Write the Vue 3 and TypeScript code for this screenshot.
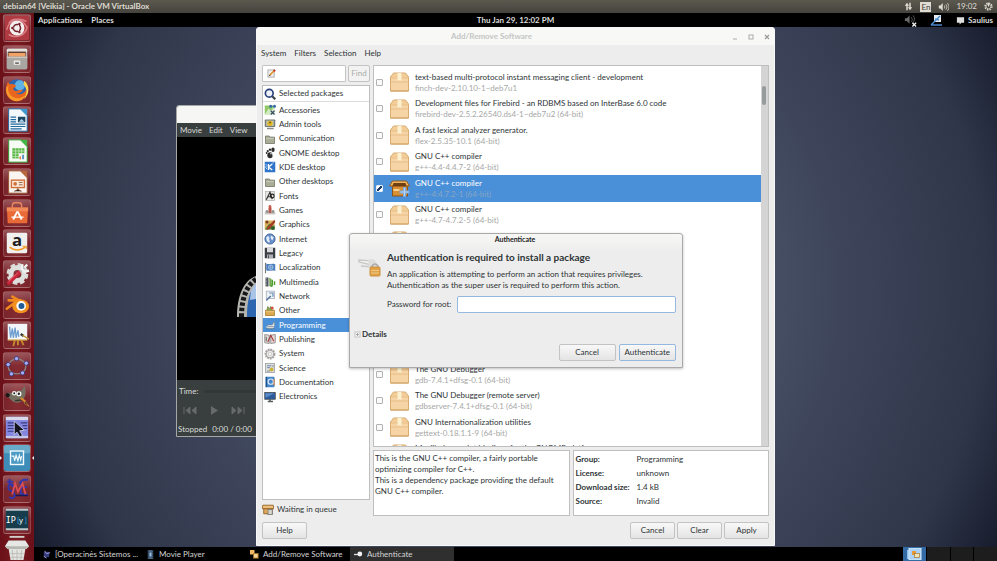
<script setup lang="ts">
import { ref } from 'vue'

interface Item {
  label: string
  icon: string
}

interface Pkg {
  name: string
  version: string
  checked?: boolean
}

const launcher: Item[] = [
  {
    label: 'Dash',
    icon: '<rect x="1" y="1" width="26" height="26" rx="2" fill="#b03a42"/><path d="M3 16C5 5 16 2 24 7M25 12c-1 10-12 14-20 9M5 9C10 2 20 3 25 14" stroke="#d88086" stroke-width="1.6" fill="none"/><circle cx="14" cy="14" r="8" fill="#f6efef"/><circle cx="14" cy="14" r="3.8" fill="none" stroke="#6f2028" stroke-width="1.7"/><path d="M14 14l-5.500 0M14 14l3-5M14 14l3 5" stroke="#f6efef" stroke-width="1"/><circle cx="9" cy="14" r="1.300" fill="#6f2028"/><circle cx="16.600" cy="9.600" r="1.300" fill="#6f2028"/><circle cx="16.600" cy="18.400" r="1.300" fill="#6f2028"/>',
  },
  {
    label: 'Files',
    icon: '<rect x="3" y="3" width="22" height="22" rx="1.500" fill="#b9b6b2"/><rect x="3" y="3" width="22" height="4" rx="1.500" fill="#e3e1de"/><rect x="4.500" y="6" width="19" height="7" fill="#5b3b2d"/><rect x="5" y="7.500" width="18" height="4" fill="#f0a267"/><rect x="3" y="11.500" width="22" height="13.500" rx="1" fill="#aaa7a3"/><path d="M3 12h22" stroke="#dedcd9"/><rect x="10.500" y="15.500" width="7" height="5" rx="1" fill="#e9e8e6"/><rect x="12" y="17.500" width="4" height="2" fill="#77736e"/>',
  },
  {
    label: 'Firefox',
    icon: '<circle cx="14" cy="13.500" r="11" fill="#2b66b4"/><circle cx="17" cy="9" r="5.500" fill="#5fb3e6"/><path d="M22 4c6 5 6 15-1 20 4-6 4-12 0-16z" fill="#ffd34a"/><path d="M4 5l3 3c2-1 5 0 6 2l-3 2c0 2 1 3 3 3 3 0 4-2 7-1-1 3-4 4-7 3 4 4 10 0 11-4 1 8-4 13-11 13C6 26 0 19 2.500 10z" fill="#e8651e"/><path d="M5 9c-2 7 2 13 9 14 6 0 9-3 10-6-1 6-5 9-10 9C7 26 1 19 2.500 11z" fill="#f79a2b"/>',
  },
  {
    label: 'Writer',
    icon: '<path d="M5 2h13l7 7v17H5z" fill="#f4f8fb" stroke="#16659e"/><path d="M17 2h8v8z" fill="#3f97cf"/><path d="M7 11h6M7 13.500h6M7 16h6M7 18.500h16M7 21h16M7 23.500h12" stroke="#20699f" stroke-width="1.300"/><rect x="15" y="10.500" width="8" height="6" fill="#1d4868"/><path d="M16 16l3-3 3 3z" fill="#b6d7eb"/>',
  },
  {
    label: 'Calc',
    icon: '<path d="M5 2h13l7 7v17H5z" fill="#f6fbf4" stroke="#2b9a2f"/><path d="M17 2h8v8z" fill="#46b548"/><rect x="9" y="11" width="13" height="11" fill="#5cb748"/><path d="M9 14h13M9 17h13M9 20h13M12.500 11v11M16 11v11M19 11v11" stroke="#d9f0d2" stroke-width=".7"/><rect x="16" y="16.500" width="6.500" height="7" fill="#f7f7f7"/><path d="M17.500 23v-3" stroke="#e2742c" stroke-width="1.600"/><path d="M20.500 23v-5" stroke="#3379b7" stroke-width="1.600"/>',
  },
  {
    label: 'Impress',
    icon: '<path d="M5 2h13l7 7v17H5z" fill="#fbf6f1" stroke="#95512b"/><path d="M17 2h8v8z" fill="#b7683a"/><rect x="8" y="12" width="14" height="8" fill="#fbe9db" stroke="#d07038" stroke-width="1.500"/><circle cx="12" cy="16" r="2" fill="#d07038"/><path d="M16 14.500h4M16 17h4M15 20v3M11 24l4-2 4 2" stroke="#8b5a3b" stroke-width="1"/>',
  },
  {
    label: 'Software Center',
    icon: '<path d="M3 8h23l-1 17H4z" fill="#ea6a37"/><path d="M3 8h23v4H3z" fill="#f28a58"/><path d="M9 10V6q0-3 3-3h4q3 0 3 3v4" fill="none" stroke="#e8875f" stroke-width="1.500"/><path d="M10 21l4-8h1l4 8" fill="none" stroke="#fff" stroke-width="2"/><path d="M8 18.500h13" stroke="#fff" stroke-width="1.300"/>',
  },
  {
    label: 'Amazon',
    icon: '<rect x="3" y="3" width="22" height="22" rx="1.500" fill="#f0f0ee"/><text x="14" y="17" text-anchor="middle" font-family="Open Sans, sans-serif" font-weight="700" font-size="18" fill="#1d1d1d">a</text><path d="M6 18.500c5 4 12 4 17 0" fill="none" stroke="#f29a22" stroke-width="1.700"/><path d="M20 17.500h4v3" fill="none" stroke="#f29a22" stroke-width="1.200"/>',
  },
  {
    label: 'System Settings',
    icon: '<circle cx="14.500" cy="14" r="10" fill="none" stroke="#d9d9d7" stroke-width="3.500" stroke-dasharray="5 2.850"/><circle cx="14.500" cy="14" r="7" fill="none" stroke="#dededc" stroke-width="5.500"/><path d="M15 14l7-7" stroke="#bebebe" stroke-width="3"/><path d="M20 3.500l-1 5 3 3 5-1M22 7l3-3" stroke="#f1f1f1" stroke-width="2.600" fill="none"/><path d="M5 23.500L16 13" stroke="#c9253a" stroke-width="4" stroke-linecap="round"/><path d="M5 22L15 12.500" stroke="#ea6c79" stroke-width="1"/>',
  },
  {
    label: 'Blender',
    icon: '<path d="M3 18l12-9H5M9 5l14 8" fill="none" stroke="#f08a1c" stroke-width="2.800" stroke-linecap="round"/><ellipse cx="18" cy="15.500" rx="9" ry="7.500" fill="#f3911f"/><circle cx="18.500" cy="15" r="5.200" fill="#fff"/><circle cx="18.800" cy="15" r="3.200" fill="#205d94"/>',
  },
  {
    label: 'Paint',
    icon: '<path d="M12 18l-2 8M18 18l3 7M15 18v7" stroke="#c38a2b" stroke-width="2"/><rect x="4" y="2" width="21" height="17.500" fill="#f3f6f8"/><path d="M6 5l1 12 2-10 1 10 2-11 1 11 2-8 1 7" fill="none" stroke="#6f9fd0" stroke-width="1.400"/><path d="M18 13l3 2" stroke="#333" stroke-width="2.600"/><path d="M20 14.500l7 4" stroke="#c89437" stroke-width="1.600"/><path d="M4 19.500h21" stroke="#c99136" stroke-width="1.300"/>',
  },
  {
    label: 'Geometry',
    icon: '<ellipse cx="14" cy="14.500" rx="9.500" ry="8" fill="none" stroke="#8a8281" stroke-width="1.500"/><g fill="#a5abf5" stroke="#2c2d73" stroke-width=".8"><circle cx="13.500" cy="6" r="2.300"/><circle cx="24" cy="11" r="2.300"/><circle cx="20" cy="21.500" r="2.300"/><circle cx="8" cy="22.500" r="2.300"/><circle cx="4.500" cy="12.500" r="2.300"/></g>',
  },
  {
    label: 'GIMP',
    icon: '<path d="M4 9c4 2 7-1 9-1 5 0 7-1 9-6 3 7 1 16-6 18-6 1-9-3-12-7z" fill="#756f62"/><circle cx="4" cy="12" r="2.200" fill="#191919"/><circle cx="11" cy="10" r="2.400" fill="#eee"/><circle cx="16" cy="10.500" r="2.800" fill="#f5f5f5"/><circle cx="11" cy="10" r="1" fill="#222"/><circle cx="16" cy="10.500" r="1.300" fill="#222"/><path d="M12 18l9-1" stroke="#3a342d" stroke-width="1.500"/><path d="M18 15l5 4" stroke="#dc8a2a" stroke-width="2.200"/><path d="M22 18l5 6-5-3z" fill="#181818" stroke="#d99b43" stroke-width=".7"/>',
  },
  {
    label: 'Window Manager',
    icon: '<rect x="2" y="2" width="24" height="23" rx="2" fill="#8387e0"/><rect x="2" y="2" width="24" height="3.500" fill="#d8d9ea"/><rect x="2" y="22.500" width="24" height="2.500" fill="#c6c8e8"/><path d="M4 8.500h7M4 11.500h7M4 14.500h8M4 17.500h7M18 8.500h7M20 11.500h5M21 14.500h4" stroke="#3c3d7c" stroke-width="1.200"/><path d="M11 6.500l11 10-5 .5 3 5-3 1.500-3-5-3 3z" fill="#14141f" stroke="#c6c8e8" stroke-width="1"/>',
  },
  {
    label: 'VirtualBox',
    icon: '<rect x="0" y="0" width="28" height="28" rx="2" fill="#3d8db8"/><rect x="0" y="0" width="28" height="9" rx="2" fill="#67abc9"/><rect x="7" y="6.500" width="14" height="14.500" fill="#4a9ac4" stroke="#f4fafc" stroke-width="1.500"/><path d="M8 12h2.500l1 5 1.500-6 2 6 1.500-6 1.500 5 1-4" stroke="#f4fafc" stroke-width="1.200" fill="none"/>',
  },
  {
    label: 'Maxima',
    icon: '<g fill="none" stroke-linecap="round"><path d="M6 4v4M4 6h5M9 9c-5-2-6 7-1 7 4 0 4-5 0-6M8 16c4 2 5 7 1 8l-3-1M17 7l4-3h4M18 7v12l7 1M18 12h6" stroke="#3037ae" stroke-width="2"/><path d="M9 19l3-11 3 9 5-9 3 11" stroke="#d94d53" stroke-width="2"/><path d="M13 21h12" stroke="#171a57" stroke-width="1.500"/></g>',
  },
  {
    label: 'IPython',
    icon: '<rect x="2" y="2" width="24" height="23" fill="#173c4c"/><path d="M2 3h24M2 24h24" stroke="#bfc8cb" stroke-width="2"/><text x="2" y="17" font-family="DejaVu Sans Mono, monospace" font-size="9" fill="#fff">IP</text><text x="13" y="17" font-family="DejaVu Sans Mono, monospace" font-size="8" fill="#2f9bd3">[</text><text x="16" y="17" font-family="DejaVu Sans Mono, monospace" font-size="8" fill="#fff">y</text><text x="21" y="17" font-family="DejaVu Sans Mono, monospace" font-size="8" fill="#2f9bd3">]</text>',
  },
]

const folder =
  '<path d="M2 4h5l1 1.500h6V14H2z" fill="#a9ad98" stroke="#6a6e5e"/><path d="M3 7.500h10" stroke="#d3d6c6"/>'

const categories: Item[] = [
  { label: 'Accessories', icon: '<rect x="1" y="2" width="13" height="12" fill="#8fc868"/><path d="M1 14L6 6l3 3 5-6v11z" fill="#fff" opacity=".6"/><path d="M9 9l5 5M14 9l-5 5" stroke="#3b4a6b" stroke-width="1.500"/><circle cx="9" cy="3" r="2" fill="#3567ab"/><circle cx="14" cy="3" r="2" fill="#3567ab"/>' },
  { label: 'Admin tools', icon: '<rect x="1" y="2" width="14" height="10" rx="1" fill="#777b76"/><rect x="3" y="3.500" width="10" height="7" fill="#c6cbb4"/><circle cx="8" cy="7" r="3.500" fill="#e0b51e"/><circle cx="8" cy="6" r="1" fill="#333"/><path d="M4 14h9" stroke="#8a8e88" stroke-width="2"/>' },
  { label: 'Communication', icon: folder },
  { label: 'GNOME desktop', icon: '<ellipse cx="8" cy="11" rx="3.600" ry="4" fill="#2e2e2e"/><ellipse cx="12" cy="3.500" rx="2.200" ry="3" fill="#2e2e2e"/><circle cx="8" cy="3.500" r="1.600" fill="#2e2e2e"/><circle cx="5" cy="5.500" r="1.400" fill="#2e2e2e"/><circle cx="3.500" cy="8" r="1.200" fill="#2e2e2e"/><path d="M8 9h4v3" fill="none" stroke="#fff"/>' },
  { label: 'KDE desktop', icon: '<rect x="1" y="1" width="14" height="14" fill="#2f74c8"/><path d="M6 4v8M11 4l-5 4 5 4" fill="none" stroke="#fff" stroke-width="1.700"/><path d="M2 4l2 2-2 2 2 3M13 2l-2 1" stroke="#bcd8f5" stroke-width="1.200" fill="none"/>' },
  { label: 'Other desktops', icon: folder },
  { label: 'Fonts', icon: '<rect x="2" y="2" width="12" height="12" fill="#e7e7e4" stroke="#b0b0aa"/><path d="M3 13L8 3l3 9M5 9h5" fill="none" stroke="#333" stroke-width="1.600"/><circle cx="11" cy="8" r="2.500" fill="none" stroke="#222" stroke-width="1.400"/>' },
  { label: 'Games', icon: '<path d="M1 11h14v3H1z" fill="#c6c7c4"/><path d="M6 12V5l2-3 2 3v7z" fill="#b8564b"/><circle cx="8" cy="3" r="1.800" fill="#cf6154"/><circle cx="4" cy="10" r="2" fill="#8f918c"/><circle cx="12" cy="10" r="2" fill="#8f918c"/>' },
  { label: 'Graphics', icon: '<rect x="1" y="2" width="13" height="12" fill="#d8b15a"/><path d="M1 14l6-8 4 4 3-2v6z" fill="#4a8b3b"/><path d="M14 1L5 10l-2 5 5-2 7-9z" fill="#a43e29"/><circle cx="4" cy="4" r="2" fill="#7c3e20"/><circle cx="12" cy="12" r="2.500" fill="#2f5e2c"/>' },
  { label: 'Internet', icon: '<circle cx="8" cy="8" r="6.800" fill="#668fc9" stroke="#29518c"/><path d="M3 6c3-4 5 0 4 2s2 2 0 5c-3-1-4-4-4-7zM9 3l4 3-2 4-2-3z" fill="#e4edf6"/>' },
  { label: 'Legacy', icon: '<path d="M1 1h14v14H1z" fill="#3b3f45"/><rect x="4" y="1" width="8" height="6" fill="#d8dadb"/><rect x="4" y="10" width="8" height="5" fill="#aeb2b5"/><path d="M6 11v4" stroke="#333"/>' },
  { label: 'Localization', icon: '<path d="M2 1v14" stroke="#777" stroke-width="1.500"/><path d="M3 2c4 2 7-1 12 1v9c-5-2-8 1-12-1z" fill="#4c7fbe"/><circle cx="9" cy="7" r="3" fill="none" stroke="#bed3ec"/><path d="M6 7h6M9 4v6" stroke="#bed3ec" stroke-width=".7"/>' },
  { label: 'Multimedia', icon: '<path d="M2 2h4v12H2z" fill="#4f545d"/><path d="M3 3v11" stroke="#dedede" stroke-dasharray="1 1"/><path d="M7 2l3 2v8l-3 2z" fill="#77a955"/><path d="M11 5v7M14 7v5" stroke="#4d9e2d" stroke-width="2"/><ellipse cx="10" cy="13" rx="2" ry="1.500" fill="#4d9e2d"/>' },
  { label: 'Network', icon: '<rect x="3" y="1.500" width="11" height="10" fill="#eef1f5" stroke="#9fa8b5"/><path d="M3 14l6-6" stroke="#59769f" stroke-width="2.200"/><path d="M7 4h5v5" fill="none" stroke="#6689b8" stroke-width="1.600"/>' },
  { label: 'Other', icon: '<path d="M2 7h12v7H2z" fill="#dba94e" stroke="#a57423"/><path d="M4 7l1-5 3 3 1-3 2 5" fill="#85a850" stroke="#6b7f40"/><circle cx="11" cy="4" r="2" fill="#cf5442"/><path d="M2 9h12" stroke="#f0d18d"/>' },
  { label: 'Programming', icon: '<path d="M2 10h12l-2 3H5z" fill="#d8d8d3"/><path d="M4 8h7l3-5v7H6z" fill="#e9e9e6" stroke="#6d7987" stroke-width=".6"/><path d="M3 13h11" stroke="#536a83"/>' },
  { label: 'Publishing', icon: '<path d="M1 2l6 1v11l-6-1z" fill="#e4dfda" stroke="#777"/><path d="M15 2L9 3v11l6-1z" fill="#ead9d6" stroke="#777"/><path d="M5 12L9 3l4 8" stroke="#a33b3b" stroke-width="1.400" fill="none"/><path d="M3 11V5" stroke="#333"/>' },
  { label: 'System', icon: '<circle cx="8" cy="8" r="6" fill="none" stroke="#a9a4a4" stroke-width="2.600" stroke-dasharray="2.500 1"/><circle cx="8" cy="8" r="5" fill="#f4f4f4" stroke="#8f8989"/><circle cx="8" cy="8" r="2.500" fill="none" stroke="#c3bcbc"/>' },
  { label: 'Science', icon: '<rect x="2" y="2" width="12" height="12" fill="#dfe0e0" stroke="#94989a"/><path d="M4 5h6M4 7.500h4" stroke="#4b6b96"/><circle cx="10" cy="10" r="2.700" fill="#cdb23c"/><path d="M4 12h4M12 4v3" stroke="#6a7278"/>' },
  { label: 'Documentation', icon: '<rect x="3" y="1" width="11" height="14" rx="1" fill="#4585c8"/><path d="M3 1v14" stroke="#1f5390" stroke-width="2"/><circle cx="9" cy="7.500" r="3.500" fill="none" stroke="#d8e8f7" stroke-width="1.600"/><path d="M13.500 4v9" stroke="#d17b40" stroke-width="1.500"/>' },
  { label: 'Electronics', icon: '<rect x="1" y="2" width="14" height="9" fill="#2c5c9c" stroke="#3d4248"/><path d="M2 3h12L2 9z" fill="#5b8cc9"/><path d="M5 14h7M8 11v3" stroke="#585c5e" stroke-width="2"/>' },
]

const packages = ref<Pkg[]>([
  { name: 'text-based multi-protocol instant messaging client - development', version: 'finch-dev-2.10.10-1~deb7u1' },
  { name: 'Development files for Firebird - an RDBMS based on InterBase 6.0 code', version: 'firebird-dev-2.5.2.26540.ds4-1~deb7u2 (64-bit)' },
  { name: 'A fast lexical analyzer generator.', version: 'flex-2.5.35-10.1 (64-bit)' },
  { name: 'GNU C++ compiler', version: 'g++-4.4-4.4.7-2 (64-bit)' },
  { name: 'GNU C++ compiler', version: 'g++-4:4.7.2-1 (64-bit)', checked: true },
  { name: 'GNU C++ compiler', version: 'g++-4.7-4.7.2-5 (64-bit)' },
  { name: '', version: '' },
  { name: '', version: '' },
  { name: '', version: '' },
  { name: '', version: '' },
  { name: '', version: '' },
  { name: 'The GNU Debugger', version: 'gdb-7.4.1+dfsg-0.1 (64-bit)' },
  { name: 'The GNU Debugger (remote server)', version: 'gdbserver-7.4.1+dfsg-0.1 (64-bit)' },
  { name: 'GNU Internationalization utilities', version: 'gettext-0.18.1.1-9 (64-bit)' },
  { name: 'Mozilla Javascript bindings for the GNOME platform', version: '' },
])

const facts = [
  ['Group:', 'Programming'],
  ['License:', 'unknown'],
  ['Download size:', '1.4 kB'],
  ['Source:', 'Invalid'],
]

const selectedCategory = ref('Programming')
const search = ref('')
const password = ref('')
</script>

<template>
  <div class="screen">
    <header class="host-bar">
      <span class="host-title">debian64 [Veikia] - Oracle VM VirtualBox</span>
      <div class="host-tray">
        <svg class="i9" viewBox="0 0 12 12"><path d="M4 11V3M8 1v8" stroke="#dfdbd2" stroke-width="2" /><path d="M1 5l3-4 3 4zM5 7l3 4 3-4z" fill="#dfdbd2" /></svg>
        <span class="lang">En</span>
        <svg class="i11" viewBox="0 0 14 12"><path d="M1 4h2l3-3v10L3 8H1z" fill="#dfdbd2" /><path d="M8 4q1.500 2 0 4M10 2.500q3 3.500 0 7M12 1q4 5 0 10" stroke="#dfdbd2" fill="none" /></svg>
        <span>19:02</span>
        <svg class="i9" viewBox="0 0 12 12"><circle cx="6" cy="6" r="4.500" stroke="#dfdbd2" stroke-width="2" stroke-dasharray="2 1.500" fill="none" /><circle cx="6" cy="6" r="3" stroke="#dfdbd2" fill="none" /><path d="M6 1v5" stroke="#dfdbd2" stroke-width="1.500" /></svg>
      </div>
    </header>

    <div class="below">
      <nav class="launcher" aria-label="Launcher">
        <div class="tiles">
          <button v-for="app in launcher" :key="app.label" class="tile" :class="{ running: app.label === 'VirtualBox' }" :aria-label="app.label">
            <svg class="tile-art" viewBox="0 0 28 28" v-html="app.icon" />
          </button>
        </div>
        <svg class="trash" viewBox="0 0 28 26">
          <rect x="6" y="0" width="16" height="2" fill="#d4d0ce" />
          <path d="M5 5h18l4 6-3 3H4l-3-3z" fill="#e6e6e4" />
          <path d="M1 11h26l-3 3H4z" fill="#b6b6b3" />
          <path d="M5 14h18l-2 12H7z" fill="#e2e2df" />
          <path d="M9 15l1 11M14 15v11M19 15l-1 11M7 19h14M7 23h14" stroke="#bcbcb9" />
        </svg>
      </nav>

      <div class="guest">
        <header class="panel">
          <div class="panel-menus"><button>Applications</button><button>Places</button></div>
          <span class="clock">Thu Jan 29, 12:02 PM</span>
          <div class="panel-tray">
            <svg class="i13" viewBox="0 0 14 13"><path d="M1 4h2l3-3v9L3 7H1z" fill="#6b6b6b" /><path d="M8 3q2 3 0 5M10 1q3 4 0 8" stroke="#555" fill="none" /><path d="M9 9l4 4M13 9l-4 4" stroke="#eee" stroke-width="1.500" /></svg>
            <svg class="i13" viewBox="0 0 13 13"><rect x="4" y="1" width="7" height="7" fill="#e9eef5" /><path d="M10 2L3 9M1 11h11M5 5l4 1M3 9l-2 2" stroke="#4b8bcb" stroke-width="1.500" fill="none" /></svg>
            <svg class="i9" viewBox="0 0 10 9"><path d="M1 1h8v6H6L4 9 4 7H1z" fill="#dedede" /></svg>
            <span>Saulius</span>
          </div>
        </header>

        <main class="desktop">
          <section class="movie" aria-label="Movie Player">
            <div class="movie-title"></div>
            <div class="movie-menu"><button>Movie</button><button>Edit</button><button>View</button></div>
            <div class="movie-view">
              <svg class="reel" viewBox="0 0 60 44">
                <path d="M10 43C10 18 16 6 28 2h24v41z" fill="#2f66b0" />
                <path d="M15 16C18 8 22 5 28 3h24v17l-38 6z" fill="#a9c4e6" />
                <path d="M1 43C1 20 9 3 24 1L26 6C15 10 11 24 11 43z" fill="#b5b5b0" />
                <path d="M5.500 43C5.500 22 12 8 24 3.500" fill="none" stroke="#17171a" stroke-width="5" stroke-dasharray="3.500 2" />
              </svg>
            </div>
            <div class="movie-controls">
              <div class="seek"><label for="seek">Time:</label><input id="seek" type="range" value="0" disabled /></div>
              <div class="transport">
                <button aria-label="Previous" disabled><svg viewBox="0 0 14 9"><path d="M1 1v7M7 1v7L3 4.500zM13 1v7L9 4.500z" fill="#666a69" stroke="#666a69" /></svg></button>
                <button aria-label="Play" disabled><svg viewBox="0 0 14 9"><path d="M4 0v9l7-4.500z" fill="#666a69" /></svg></button>
                <button aria-label="Next" disabled><svg viewBox="0 0 14 9"><path d="M13 1v7M7 1v7l4-3.500zM1 1v7l4-3.500z" fill="#666a69" stroke="#666a69" /></svg></button>
              </div>
              <div class="movie-status"><span>Stopped</span><span>0:00 / 0:00</span></div>
            </div>
          </section>

          <section class="software" aria-label="Add/Remove Software">
            <div class="title-bar">
              <span class="title-text">Add/Remove Software</span>
              <div class="win-buttons">
                <button aria-label="Minimize"><svg viewBox="0 0 6 6"><path d="M1 5h4" stroke="#aaa" /></svg></button>
                <button aria-label="Maximize"><svg viewBox="0 0 6 6"><rect x="1" y="1" width="4" height="4" fill="none" stroke="#aaa" /></svg></button>
                <button aria-label="Close"><svg viewBox="0 0 6 6"><path d="M1 1l4 4M5 1L1 5" stroke="#999" stroke-width="1.200" /></svg></button>
              </div>
            </div>
            <div class="menu-bar"><button>System</button><button>Filters</button><button>Selection</button><button>Help</button></div>

            <div class="content">
              <div class="sidebar">
                <div class="search">
                  <div class="search-box">
                    <svg class="i9" viewBox="0 0 10 10"><rect x="1" y="1" width="7" height="8" fill="#eee" stroke="#aaa" /><path d="M3 7l5-5" stroke="#e09124" stroke-width="1.800" /><path d="M7.500 2.500L9 1" stroke="#cc2d26" stroke-width="2" /><path d="M2.500 8l1-1.500" stroke="#333" /></svg>
                    <input v-model="search" type="text" aria-label="Search packages" />
                  </div>
                  <button class="btn find" disabled>Find</button>
                </div>
                <div class="list">
                  <button class="category selected-packages">
                    <svg class="cat-art" viewBox="0 0 16 16"><path d="M11 11l4 4" stroke="#3d4144" stroke-width="3" /><circle cx="7" cy="7" r="5.200" fill="#eef2f8" stroke="#263f78" stroke-width="2.200" /></svg>
                    <span>Selected packages</span>
                  </button>
                  <div class="categories">
                    <button v-for="c in categories" :key="c.label" class="category" :class="{ active: c.label === selectedCategory }" @click="selectedCategory = c.label">
                      <svg class="cat-art" viewBox="0 0 16 16" v-html="c.icon" />
                      <span>{{ c.label }}</span>
                    </button>
                  </div>
                </div>
                <div class="status">
                  <svg class="i12" viewBox="0 0 14 12"><path d="M2 5h10v6H2z" fill="#e0a75a" stroke="#8d5b20" /><path d="M1 1h12l1 4H0z" fill="#eec07a" stroke="#8d5b20" /><rect x="7" y="6" width="5" height="6" fill="#d8d4c6" stroke="#777" /></svg>
                  <span>Waiting in queue</span>
                </div>
              </div>

              <div class="main-col">
                <div class="packages">
                  <div class="package-rows">
                    <label v-for="(p, i) in packages" :key="i" class="package" :class="{ current: i === 4 }">
                      <input v-model="p.checked" type="checkbox" />
                      <svg v-if="i !== 4" class="box" viewBox="0 0 20 20">
                        <path d="M4 1h12l3 4v14H1V5z" fill="#f3cd98" stroke="#d9ad72" />
                        <path d="M1.500 6h17v12.500h-17z" fill="#f6d4a6" />
                        <path d="M1.500 6h17M1.500 10h17" stroke="#e8bf88" />
                        <path d="M8 1h4v8l-2-1-2 1z" fill="#fbf0cf" />
                        <path d="M1 19h18" stroke="#cb9c5c" />
                      </svg>
                      <svg v-else class="box" viewBox="0 0 20 20">
                        <path d="M3 8h15v10H3z" fill="#d98e32" stroke="#8c5516" />
                        <path d="M3 3h14l3 5H0z" fill="#f0b55c" stroke="#93591a" />
                        <path d="M4 5h12l1 3H3z" fill="#6f3f12" />
                        <path d="M4 11h6v2H4z" fill="#f6d190" />
                        <path d="M15 9v10M10 14h10" stroke="#77a9e0" stroke-width="3" />
                        <path d="M15 10v8M11 14h8" stroke="#b9d6f4" stroke-width="1" />
                      </svg>
                      <span class="package-text">
                        <span class="package-name">{{ p.name }}</span>
                        <span class="package-version">{{ p.version }}</span>
                      </span>
                    </label>
                  </div>
                  <div class="scroll"><div class="thumb"></div></div>
                </div>
                <div class="details">
                  <p class="description">This is the GNU C++ compiler, a fairly portable optimizing compiler for C++.<br />This is a dependency package providing the default GNU C++ compiler.</p>
                  <table class="facts">
                    <tbody>
                      <tr v-for="f in facts" :key="f[0]"><th scope="row">{{ f[0] }}</th><td>{{ f[1] }}</td></tr>
                    </tbody>
                  </table>
                </div>
              </div>
            </div>

            <div class="footer">
              <button class="btn">Help</button>
              <div class="footer-right"><button class="btn">Cancel</button><button class="btn">Clear</button><button class="btn">Apply</button></div>
            </div>
          </section>

          <form class="auth" role="dialog" aria-labelledby="auth-title" @submit.prevent>
            <div id="auth-title" class="auth-title">Authenticate</div>
            <div class="auth-body">
              <svg class="auth-icon" viewBox="0 0 24 24">
                <path d="M2 5l13 1v4L2 7zM4 11l12 1" stroke="#c9c9c7" stroke-width="1.500" fill="#f7f7f6" />
                <path d="M11 5q7-3 9 4v4l-8-1z" fill="#dededc" />
                <path d="M15 13v-2q3-4 6 0v2" fill="none" stroke="#aaa" stroke-width="1.500" />
                <rect x="13" y="12" width="10" height="9" rx="1" fill="#e2a347" stroke="#c98f3e" />
                <path d="M14 15.500h8M14 18h8" stroke="#f1c98a" />
              </svg>
              <div class="auth-main">
                <h1>Authentication is required to install a package</h1>
                <p>An application is attempting to perform an action that requires privileges.<br />Authentication as the super user is required to perform this action.</p>
                <div class="password">
                  <label for="pw">Password for root:</label>
                  <input id="pw" v-model="password" type="password" />
                </div>
              </div>
            </div>
            <button type="button" class="expander"><svg viewBox="0 0 7 7"><rect x="1" y="1" width="5" height="5" fill="#fafafa" stroke="#c4c4c4" /><path d="M2 3.500h3M3.500 2v3" stroke="#888" stroke-width=".7" /></svg>Details</button>
            <div class="auth-buttons"><button type="button" class="btn">Cancel</button><button type="submit" class="btn default">Authenticate</button></div>
          </form>
        </main>

        <footer class="taskbar">
          <button class="task"><svg class="i9" viewBox="0 0 10 10"><path d="M2 2h6v6H2z" fill="#3a3d7c" /><path d="M3 1l2 3 4-1M2 7l3 2" stroke="#a3a8e3" fill="none" /></svg>[Operacinės Sistemos ...</button>
          <button class="task"><svg class="i9" viewBox="0 0 10 10"><rect x="2" y="0" width="6" height="10" fill="#4c6785" /><path d="M3 0v10M7 0v10" stroke="#1f2936" stroke-dasharray="1 1" /><rect x="4" y="3" width="2" height="4" fill="#9cc2e7" /></svg>Movie Player</button>
          <button class="task"><svg class="i9" viewBox="0 0 10 10"><rect x="0" y="0" width="5" height="5" fill="#f0b863" /><rect x="4" y="4" width="5" height="5" fill="#f5d493" stroke="#a8742b" /></svg>Add/Remove Software</button>
          <button class="task current"><svg class="i9" viewBox="0 0 10 10"><path d="M0 5h5" stroke="#ddd" stroke-width="1.500" /><circle cx="6.500" cy="4.500" r="2.700" fill="#f3f3f3" /></svg>Authenticate</button>
          <div class="workspaces">
            <button class="workspace on" aria-label="Workspace 1"><svg viewBox="0 0 16 12"><rect x="1" y="2" width="4" height="9" fill="#8fbfec" /><rect x="3" y="0" width="12" height="12" fill="#a9d2f6" stroke="#dcecfb" /><rect x="6" y="3" width="4" height="4" fill="#e69a35" /><rect x="8.500" y="5.500" width="5" height="4" fill="#f5e3b8" stroke="#a3752d" stroke-width=".7" /></svg></button>
            <button class="workspace" aria-label="Workspace 2"></button>
            <button class="workspace" aria-label="Workspace 3"></button>
            <button class="workspace" aria-label="Workspace 4"></button>
          </div>
        </footer>
      </div>
    </div>
  </div>
</template>

<style>
body {
  overflow: hidden;
}
</style>

<style scoped>
.screen,
.screen * {
  box-sizing: border-box;
}
.screen {
  display: flex;
  flex-direction: column;
  height: 100vh;
  font-family: Lato, 'Noto Sans', sans-serif;
  font-size: 8px;
  line-height: 11px;
  color: #2e3436;
}
button {
  display: flex;
  align-items: center;
  margin: 0;
  padding: 0;
  border: 0;
  background: none;
  color: inherit;
  font: inherit;
  white-space: nowrap;
}
svg {
  display: block;
  flex: none;
}
.i9 { width: 9px; height: 9px; }
.i11 { width: 11px; height: 10px; }
.i12 { width: 12px; height: 11px; }
.i13 { width: 13px; height: 13px; }

.host-bar {
  display: flex;
  flex: none;
  align-items: center;
  justify-content: space-between;
  height: 13px;
  padding: 0 4px 0 3px;
  background: linear-gradient(#5b594f, #45433d);
  color: #dfdbd2;
}
.host-title { font-weight: 700; }
.host-tray { display: flex; align-items: center; gap: 7px; }
.lang {
  padding: 0 1px;
  background: #dfdbd2;
  color: #45433d;
  line-height: 10px;
}

.below { display: flex; flex: 1; min-height: 0; }
.launcher {
  flex: none;
  width: 34px;
  overflow: hidden;
  background: linear-gradient(90deg, #6a1018, #7a1a20 50%, #6a1018);
}
.tiles {
  display: grid;
  grid-auto-rows: 1fr;
  height: 522px;
}
.tile {
  position: relative;
  justify-content: center;
  padding: 0;
}
.tile-art {
  width: 28px;
  height: 28px;
  border: 1px solid rgba(255, 255, 255, 0.15);
  border-radius: 3px;
  background: linear-gradient(rgba(255, 255, 255, 0.28), rgba(255, 255, 255, 0.08) 50%);
}
.running::before,
.running::after {
  content: '';
  position: absolute;
  left: 0;
  border: 2px solid transparent;
  border-left-color: #eee;
}
.running::after {
  right: 0;
  left: auto;
  border-left-color: transparent;
  border-right-color: #eee;
}
.trash { width: 26px; height: 26px; margin: 0 auto; }

.guest { display: flex; flex: 1; flex-direction: column; min-width: 0; }
.panel {
  display: grid;
  flex: none;
  grid-template-columns: 1fr auto 1fr;
  align-items: center;
  height: 14px;
  padding: 0 4px;
  background: #000;
  color: #dcdcdc;
  font-weight: 700;
}
.panel-menus { display: flex; gap: 9px; }
.panel-tray { display: flex; align-items: center; justify-content: flex-end; gap: 3px; }
.panel-tray .i13 { margin-right: 10px; }
.desktop {
  position: relative;
  flex: 1;
  min-height: 0;
  overflow: hidden;
  background: radial-gradient(circle farthest-corner, #556377 0, #465065 45%, #3c4257 64%, #2f364a 86%, #171d2d 100%);
}

.movie {
  position: absolute;
  top: 78px;
  left: 142px;
  display: flex;
  flex-direction: column;
  width: 180px;
  height: 332px;
  overflow: hidden;
  border: 1px solid #a5a8a6;
  border-radius: 3px 3px 0 0;
  background: #393f3e;
  color: #dadcda;
}
.movie-title { flex: none; height: 17px; background: #f6f6f4; }
.movie-menu { display: flex; flex: none; gap: 7px; height: 14px; padding-left: 3px; }
.movie-view {
  display: flex;
  flex: 1;
  align-items: center;
  justify-content: center;
  background: #000;
}
.reel { width: 60px; height: 44px; margin-top: 74px; }
.movie-controls { flex: none; padding: 6px 1px 0; height: 56px; }
.seek { display: flex; align-items: center; gap: 6px; padding-left: 1px; }
.seek input {
  flex: 1;
  height: 3px;
  margin: 0;
  appearance: none;
  background: #323837;
}
.seek input::-webkit-slider-thumb { appearance: none; width: 0; }
.transport { display: flex; gap: 10px; height: 27px; padding-left: 5px; }
.transport svg { width: 14px; height: 9px; }
.movie-status { display: flex; gap: 5px; line-height: 11px; }

.software {
  position: absolute;
  top: 0;
  right: 222px;
  bottom: 1px;
  left: 222px;
  display: flex;
  flex-direction: column;
  border: 1px solid #f8f8f8;
  border-radius: 3px 3px 0 0;
  background: #ededed;
}
.title-bar {
  display: grid;
  flex: none;
  grid-template-columns: 1fr auto 1fr;
  align-items: center;
  height: 17px;
  padding: 0 4px 0 0;
  background: #f8f8f6;
  color: #c4c6c4;
  font-weight: 700;
}
.title-text { grid-column: 2; margin-right: 44px; }
.win-buttons { display: flex; justify-content: flex-end; gap: 10px; }
.win-buttons svg { width: 6px; height: 6px; }
.menu-bar { display: flex; flex: none; gap: 8px; height: 20px; padding: 0 4px 4px; }
.content {
  display: grid;
  flex: 1;
  grid-template-columns: 108px 1fr;
  gap: 3px;
  min-height: 0;
  padding: 0 5px;
}
.sidebar { display: flex; flex-direction: column; min-height: 0; }
.search { display: flex; gap: 2px; padding-bottom: 3px; }
.search-box {
  display: flex;
  flex: 1;
  align-items: center;
  min-width: 0;
  height: 17px;
  padding-left: 4px;
  border: 1px solid #c4c4c4;
  border-radius: 1px;
  background: #fff;
}
.search-box input {
  flex: 1;
  min-width: 0;
  border: 0;
  outline: 0;
  background: none;
  font: inherit;
}
.btn {
  justify-content: center;
  min-width: 45px;
  height: 17px;
  padding: 0 5px;
  border: 1px solid #c3c3c3;
  border-radius: 2px;
  background: linear-gradient(#f8f8f8, #e4e4e4);
}
.btn.find { min-width: 22px; padding: 0; width: 22px; color: #aaadaa; background: #f2f2f2; }
.list { flex: 1; min-height: 0; overflow: hidden; border: 1px solid #bfbfbf; background: #fff; }
.category { gap: 3px; width: 100%; padding-left: 1px; text-align: left; }
.selected-packages { height: 16px; border-bottom: 1px solid #ddd; }
.categories { display: grid; grid-auto-rows: 1fr; height: 302px; padding-top: 1px; }
.cat-art { width: 12px; height: 12px; }
.category.active { background: #4a90d9; color: #fff; }
.status { display: flex; align-items: center; gap: 3px; height: 18px; }

.main-col { display: flex; flex-direction: column; gap: 3px; min-width: 0; min-height: 0; padding-bottom: 2px; }
.packages {
  display: flex;
  flex: 1;
  min-height: 0;
  overflow: hidden;
  border: 1px solid #bfbfbf;
  background: #fff;
}
.package-rows {
  display: grid;
  flex: 1;
  grid-auto-rows: 1fr;
  height: 401px;
  padding-top: 3px;
}
.package { display: flex; align-items: center; gap: 6px; padding-left: 2px; }
.package input {
  width: 7px;
  height: 7px;
  margin: 0;
  appearance: none;
  border: 1px solid #b2b2b2;
  border-radius: 1px;
  background: #fafafa;
}
.package input:checked {
  border-color: #e5eefa;
  background: linear-gradient(135deg, #fff 30%, #1e3c66 30%, #1e3c66 60%, #fff 60%);
}
.box { width: 21px; height: 20px; }
.package-text { display: flex; flex-direction: column; padding-top: 1px; margin-left: -1px; white-space: nowrap; }
.package-name { min-height: 11px; }
.package-version { min-height: 11px; color: #a6a8a6; }
.package.current { background: #4a90d9; color: #fff; }
.current .package-version { color: #87a5c4; }
.scroll { width: 7px; padding: 20px 2px 0 1px; background: #d4d4d4; }
.thumb { height: 19px; border-radius: 2px; background: #989b9b; }

.details { display: grid; flex: none; grid-template-columns: 1fr 1fr; gap: 3px; height: 66px; }
.description { margin: 0; padding: 2px 0 2px 1px; border: 1px solid #bfbfbf; background: #fff; }
.facts {
  display: block;
  padding: 1px 2px;
  border: 1px solid #bfbfbf;
  background: #fff;
  border-spacing: 0;
}
.facts th,
.facts td { height: 14px; padding: 0; text-align: left; }
.facts th { width: 61px; }
.footer { display: flex; flex: none; justify-content: space-between; padding: 4px 5px 6px; }
.footer-right { display: flex; gap: 2px; }

.auth {
  position: absolute;
  top: 206px;
  right: 314px;
  left: 315px;
  display: flex;
  flex-direction: column;
  height: 135px;
  padding: 0 6px 0 4px;
  border: 1px solid #a9a9a9;
  border-radius: 3px 3px 0 0;
  background: linear-gradient(#f7f7f5, #ededed 18px);
  box-shadow: 0 1px 3px rgba(0, 0, 0, 0.25);
}
.auth-title { color: #222; font-size: 7px; font-weight: 700; text-align: center; }
.auth-body { display: flex; gap: 6px; padding-left: 3px; }
.auth-icon { width: 24px; height: 24px; margin-top: 10px; }
.auth-main { flex: 1; min-width: 0; }
h1 { margin: 7px 0 6px; font-size: 10px; line-height: 11px; }
.auth p { margin: 0 0 5px; }
.password { display: flex; align-items: center; gap: 6px; }
.password input {
  flex: 1;
  min-width: 0;
  height: 17px;
  border: 1px solid #94b8e0;
  border-radius: 2px;
  outline: 0;
  background: #fff;
  font: inherit;
}
.expander { gap: 1px; margin: 16px 0 4px; font-weight: 700; }
.expander svg { width: 7px; height: 7px; }
.auth-buttons { display: flex; justify-content: flex-end; gap: 3px; }
.auth-buttons .btn { min-width: 57px; }
.btn.default { border-color: #94b8e0; }

.taskbar { display: flex; flex: none; height: 14px; padding-left: 4px; background: #000; color: #d4d4d4; }
.task { gap: 4px; width: 104px; padding-left: 4px; }
.task.current { background: #2f2f2f; }
.workspaces { display: grid; grid-template-columns: repeat(4, 1fr); gap: 1px; width: 94px; margin-left: auto; }
.workspace { justify-content: center; background: #1d1d1d; }
.workspace.on { background: #356ba5; }
.workspace svg { width: 16px; height: 12px; }
</style>
